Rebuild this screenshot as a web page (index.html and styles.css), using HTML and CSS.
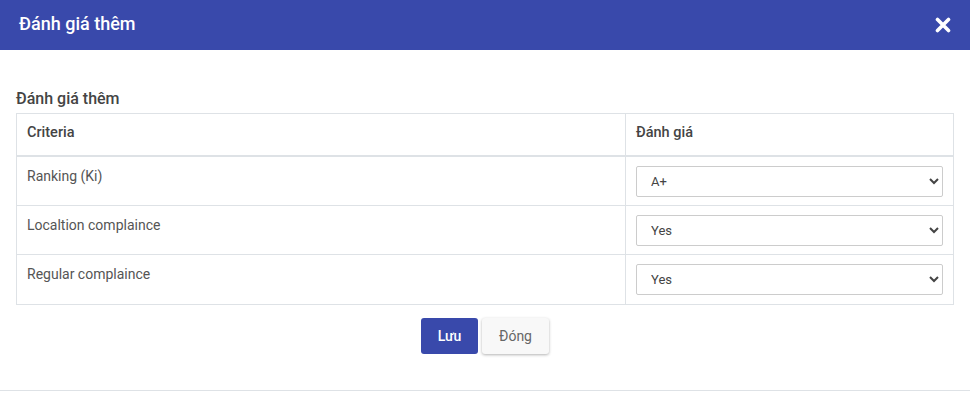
FILE: index.html
```html
<!DOCTYPE html>
<html lang="vi">
<head>
<meta charset="utf-8">
<link rel="stylesheet" href="styles.css">
</head>
<body>
<div class="modal">
  <div class="modal-header">
    <h1 class="modal-title">Đánh giá thêm</h1>
    <button class="close" aria-label="Close">
      <svg width="16" height="16" viewBox="0 0 16 16"><path d="M2.5 2.5 L13.5 13.5 M13.5 2.5 L2.5 13.5" stroke="#fff" stroke-width="3.6" stroke-linecap="round"/></svg>
    </button>
  </div>
  <div class="modal-body">
    <h2 class="section-title">Đánh giá thêm</h2>
    <table class="grid">
      <thead>
        <tr><th class="col-criteria">Criteria</th><th class="col-rate">Đánh giá</th></tr>
      </thead>
      <tbody>
        <tr><td>Ranking (Ki)</td><td><select class="sel"><option>A+</option></select></td></tr>
        <tr><td>Localtion complaince</td><td><select class="sel"><option>Yes</option></select></td></tr>
        <tr><td>Regular complaince</td><td><select class="sel"><option>Yes</option></select></td></tr>
      </tbody>
    </table>
    <div class="actions">
      <button class="btn btn-primary">Lưu</button>
      <button class="btn btn-light">Đóng</button>
    </div>
  </div>
  <div class="modal-footer"></div>
</div>
</body>
</html>
```
FILE: styles.css
```css
* { box-sizing: border-box; }
html, body { margin: 0; padding: 0; background: #fff; }
body { font-family: Roboto, "Noto Sans", "Liberation Sans", sans-serif; color: #444; }
.modal { width: 970px; }
.modal-header {
  height: 50px;
  background: #3949ab;
  display: flex;
  align-items: center;
  justify-content: space-between;
  padding: 0 19px 3px 19px;
}
.modal-title { margin: 0; font-size: 18px; font-weight: 500; color: #fff; line-height: 22px; }
.close { background: none; border: 0; padding: 0; width: 16px; height: 16px; display: flex; cursor: pointer; margin-top: 3px; }
.modal-body { padding: 39px 16px 0 16px; }
.section-title { margin: 0 0 4px 0; font-size: 16px; font-weight: 500; color: #444; line-height: 20px; }
.grid { width: 938px; border-collapse: collapse; font-size: 14px; table-layout: fixed; }
.grid th, .grid td { border: 1px solid #dee2e6; text-align: left; vertical-align: top; }
.grid th { font-size: 14.5px; font-weight: 500; color: #444; padding: 10px 10px 10px 10px; height: 42px; border-bottom: 2px solid #dee2e6; line-height: 18px; }
.col-criteria { width: 609px; }
.grid td { padding: 9px 10px 8px 10px; height: 49.5px; color: #555; line-height: 17px; }
.grid td:first-child { padding-top: 11px; }
.sel {
  display: block;
  width: 100%;
  height: 31px;
  border: 1px solid #ccc;
  border-radius: 2px;
  background: #fff;
  font-family: inherit;
  font-size: 13px;
  color: #444;
  padding: 0 10px;
}
.actions { display: flex; justify-content: center; gap: 4px; padding: 13px 0 36px 0; }
.btn { font-family: inherit; font-size: 14px; height: 36px; border-radius: 3px; border: 0; padding: 0 10px; cursor: pointer; }
.btn-primary { background: #3949ab; color: #fff; font-weight: 500; width: 57px; }
.btn-light { background: #f8f8f8; color: #666; font-weight: 400; width: 67px; box-shadow: 0 1px 3px rgba(0,0,0,0.3); }
.modal-footer { border-top: 1px solid #dee2e6; height: 30px; }
```
